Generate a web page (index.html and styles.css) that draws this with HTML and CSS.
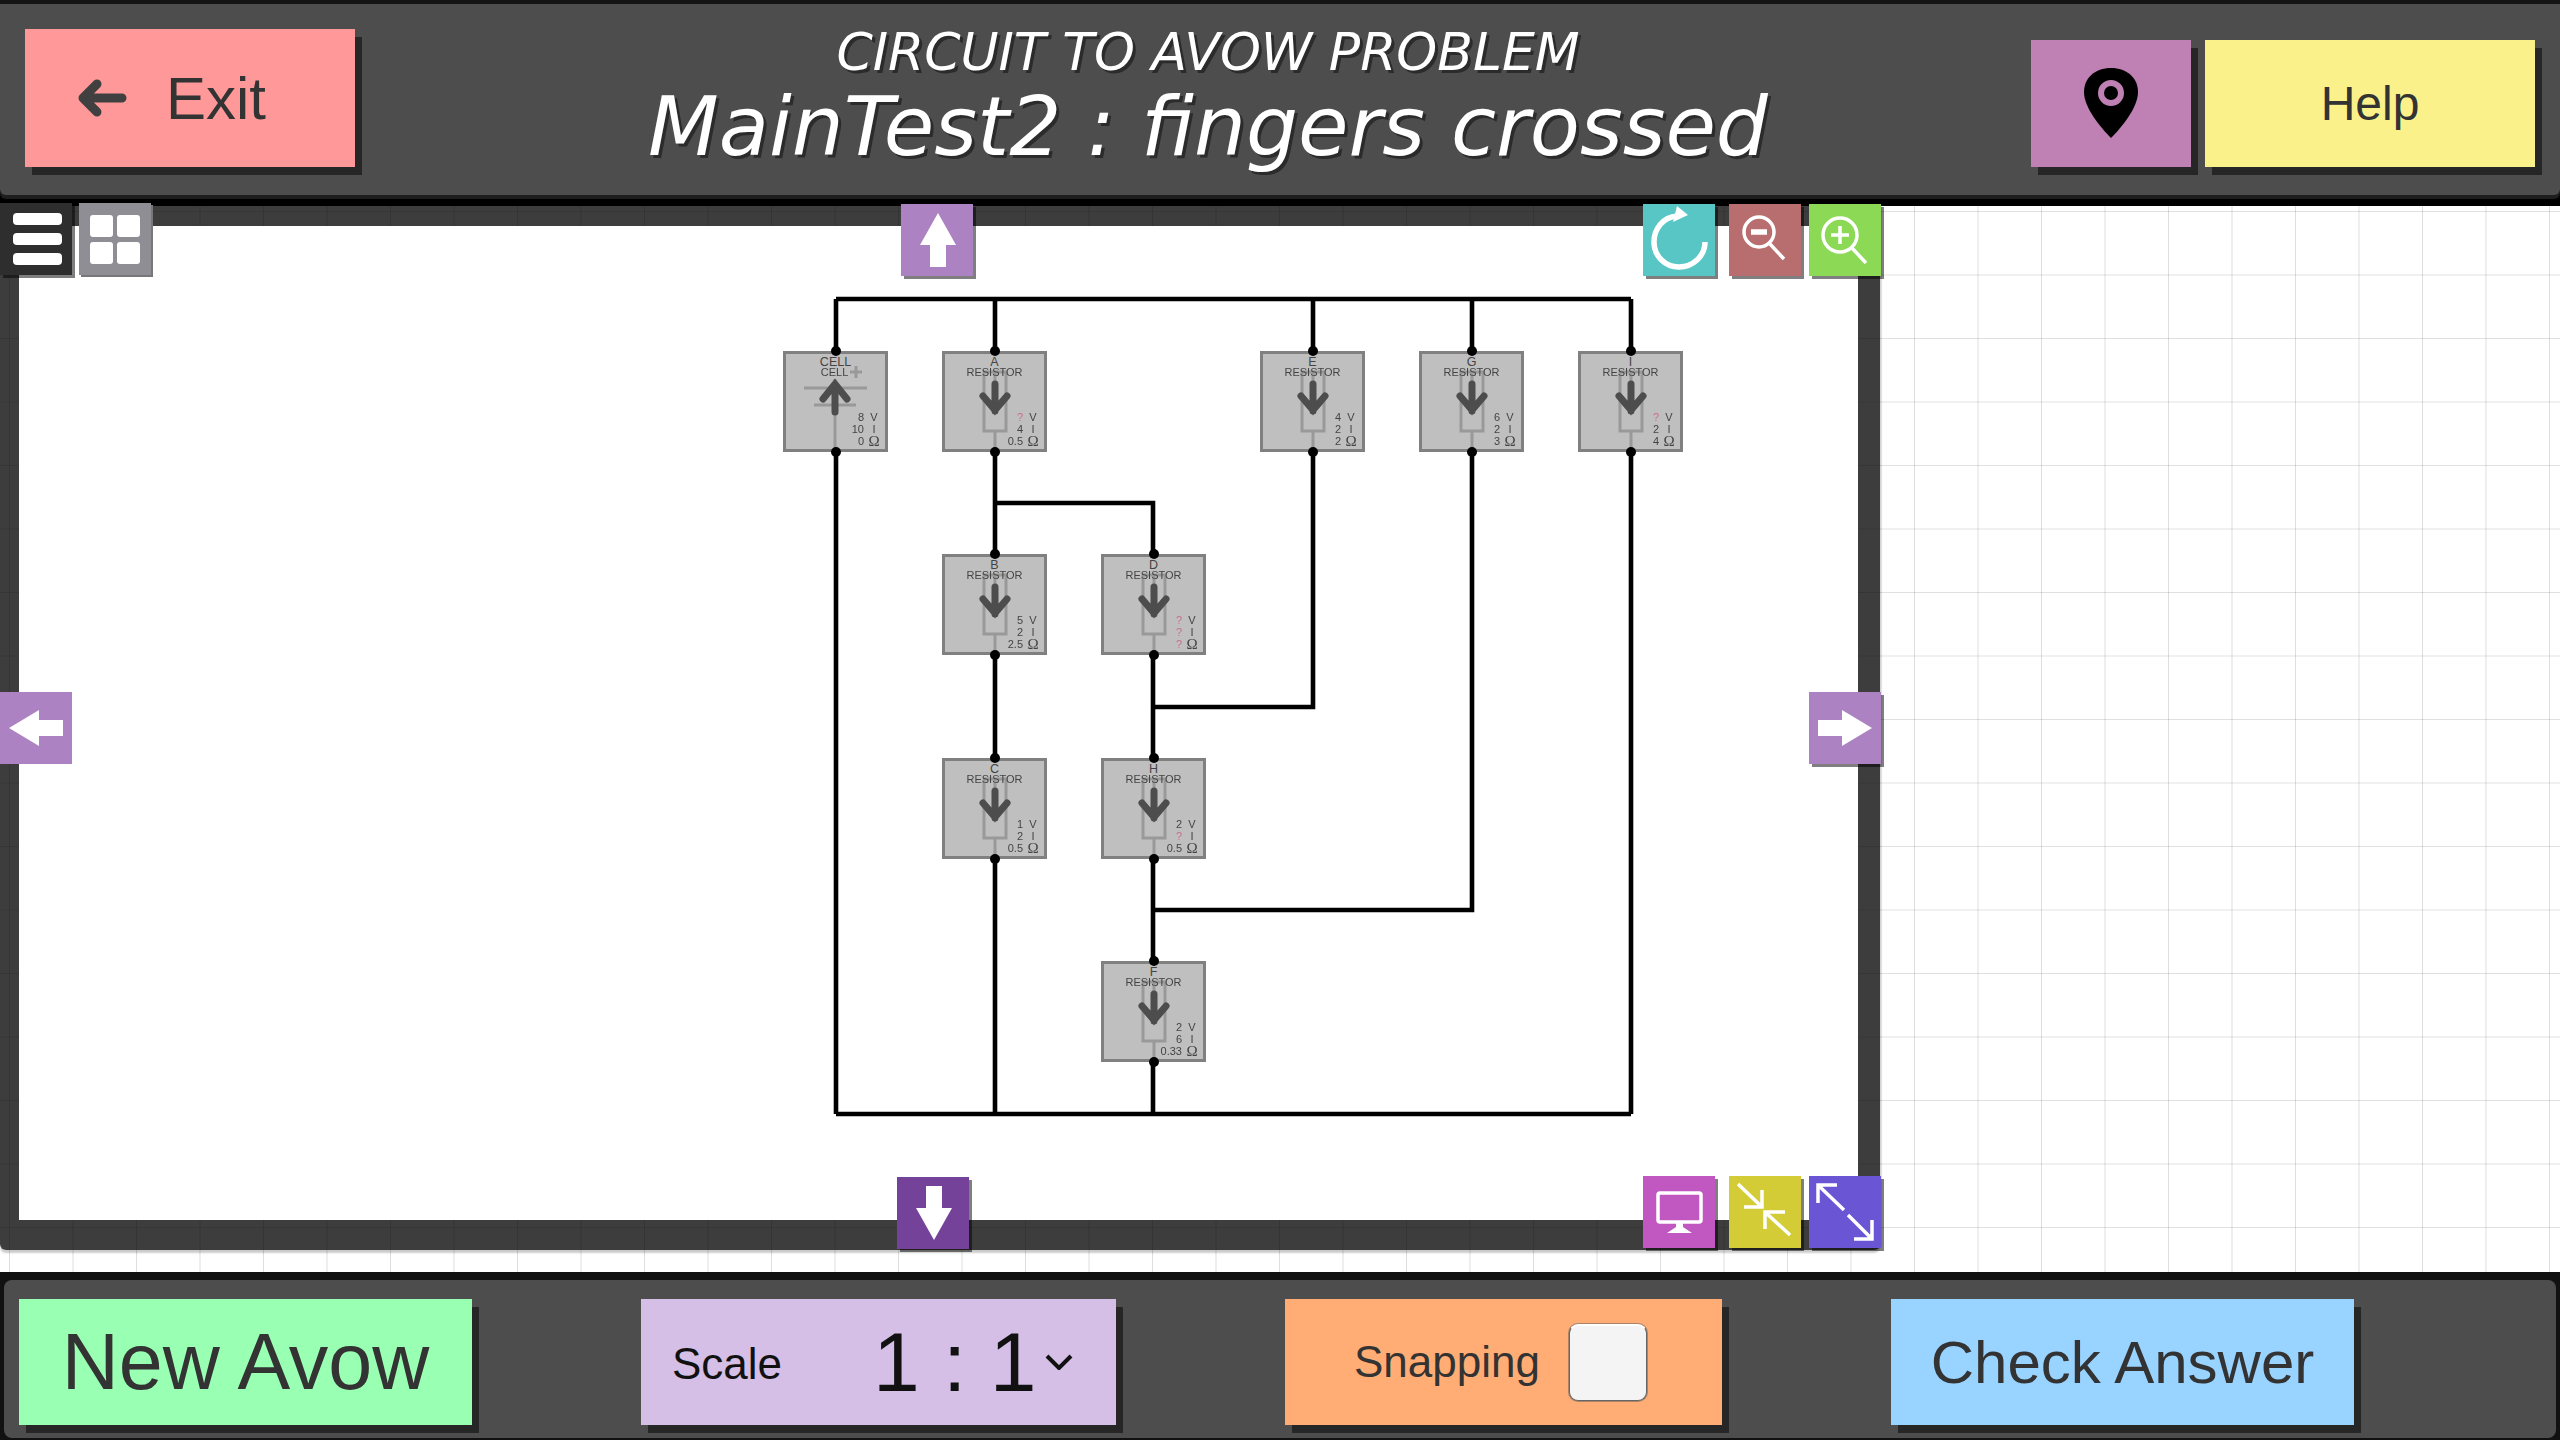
FILE: index.html
```html
<!DOCTYPE html>
<html lang="en">
<head>
<meta charset="utf-8">
<title>Circuit to AVOW problem</title>
<link rel="stylesheet" href="styles.css">
</head>
<body>
<svg class="defs" width="0" height="0" aria-hidden="true">
  <symbol id="res" viewBox="0 0 105 101">
    <path class="sym-line" d="M42 21H64V80H42ZM53 80V100M53 21V31"/>
    <path class="sym-arrow" d="M53 33V60M41 45L53 59L65 45"/>
  </symbol>
  <symbol id="cell" viewBox="0 0 105 101">
    <path class="sym-line" d="M21 37H84M31 54H73M52 28V100M67 21H79M73 15V27"/>
    <path class="sym-arrow" d="M52 61V34M40 48L52 33L64 48"/>
  </symbol>
</svg>

<header class="top">
  <div class="top-panel">
    <button class="btn exit">
      <svg class="exit-arrow" viewBox="0 0 51 38"><path d="M20 5L6 19L20 33M8 19H45"/></svg>
      <span>Exit</span>
    </button>
    <div class="title">
      <div class="title-sub">CIRCUIT TO AVOW PROBLEM</div>
      <div class="title-main">MainTest2 : fingers crossed</div>
    </div>
    <button class="btn pin" aria-label="Location">
      <svg viewBox="0 0 160 127"><path class="pin-body" d="M80 28C64 28 53 38 53 52C53 68 70 88 80 98C90 88 107 68 107 52C107 38 96 28 80 28Z"/><ellipse class="pin-ring" cx="80" cy="53" rx="10" ry="10"/></svg>
    </button>
    <button class="btn help">Help</button>
  </div>
</header>

<main class="stage">
  <section class="frame">
    <div class="board">
      <svg class="wires" viewBox="19 226 1839 994">
        <path d="M836 299H1631M836 1114H1631M836 299V351M995 299V351M1313 299V351M1472 299V351M1631 299V351M836 452V1114M1631 452V1114M995 452V554M995 503H1153V554M995 656V758M995 859V1114M1153 656V758M1153 707H1313V452M1153 859V961M1153 910H1472V452M1153 1063V1114"/>
      </svg>

      <div class="node c1 r1">
        <svg class="sym"><use href="#cell"/></svg>
        <div class="lbl">CELL</div><div class="kind cell-kind">CELL</div>
        <div class="vals"><b>8</b><i>V</i><b>10</b><i>I</i><b>0</b><i class="ohm">Ω</i></div>
      </div>
      <div class="node c2 r1">
        <svg class="sym"><use href="#res"/></svg>
        <div class="lbl">A</div><div class="kind">RESISTOR</div>
        <div class="vals"><b class="q">?</b><i>V</i><b>4</b><i>I</i><b>0.5</b><i class="ohm">Ω</i></div>
      </div>
      <div class="node c4 r1">
        <svg class="sym"><use href="#res"/></svg>
        <div class="lbl">E</div><div class="kind">RESISTOR</div>
        <div class="vals"><b>4</b><i>V</i><b>2</b><i>I</i><b>2</b><i class="ohm">Ω</i></div>
      </div>
      <div class="node c5 r1">
        <svg class="sym"><use href="#res"/></svg>
        <div class="lbl">G</div><div class="kind">RESISTOR</div>
        <div class="vals"><b>6</b><i>V</i><b>2</b><i>I</i><b>3</b><i class="ohm">Ω</i></div>
      </div>
      <div class="node c6 r1">
        <svg class="sym"><use href="#res"/></svg>
        <div class="lbl">I</div><div class="kind">RESISTOR</div>
        <div class="vals"><b class="q">?</b><i>V</i><b>2</b><i>I</i><b>4</b><i class="ohm">Ω</i></div>
      </div>
      <div class="node c2 r2">
        <svg class="sym"><use href="#res"/></svg>
        <div class="lbl">B</div><div class="kind">RESISTOR</div>
        <div class="vals"><b>5</b><i>V</i><b>2</b><i>I</i><b>2.5</b><i class="ohm">Ω</i></div>
      </div>
      <div class="node c3 r2">
        <svg class="sym"><use href="#res"/></svg>
        <div class="lbl">D</div><div class="kind">RESISTOR</div>
        <div class="vals"><b class="q">?</b><i>V</i><b class="q">?</b><i>I</i><b class="q">?</b><i class="ohm">Ω</i></div>
      </div>
      <div class="node c2 r3">
        <svg class="sym"><use href="#res"/></svg>
        <div class="lbl">C</div><div class="kind">RESISTOR</div>
        <div class="vals"><b>1</b><i>V</i><b>2</b><i>I</i><b>0.5</b><i class="ohm">Ω</i></div>
      </div>
      <div class="node c3 r3">
        <svg class="sym"><use href="#res"/></svg>
        <div class="lbl">H</div><div class="kind">RESISTOR</div>
        <div class="vals"><b>2</b><i>V</i><b class="q">?</b><i>I</i><b>0.5</b><i class="ohm">Ω</i></div>
      </div>
      <div class="node c3 r4">
        <svg class="sym"><use href="#res"/></svg>
        <div class="lbl">F</div><div class="kind">RESISTOR</div>
        <div class="vals"><b>2</b><i>V</i><b>6</b><i>I</i><b>0.33</b><i class="ohm">Ω</i></div>
      </div>
    </div>

    <div class="tools tools-tl">
      <button class="tool t-menu" aria-label="Menu"><span class="bars"><span></span><span></span><span></span></span></button>
      <button class="tool t-grid" aria-label="Grid"><span class="cells"><span></span><span></span><span></span><span></span></span></button>
    </div>
    <button class="tool nudge nudge-up" aria-label="Up"><svg viewBox="0 0 72 72"><path class="fill" d="M37 9L55 41H45V63H29V41H19Z"/></svg></button>
    <button class="tool nudge nudge-down" aria-label="Down"><svg viewBox="0 0 72 72"><path class="fill" d="M29 9H45V31H55L37 63L19 31H29Z"/></svg></button>
    <button class="tool nudge nudge-left" aria-label="Left"><svg viewBox="0 0 72 72"><path class="fill" d="M9 36L39 18V28H63V44H39V54Z"/></svg></button>
    <button class="tool nudge nudge-right" aria-label="Right"><svg viewBox="0 0 72 72"><path class="fill" d="M9 28H33V18L63 36L33 54V44H9Z"/></svg></button>

    <div class="tools tools-tr">
      <button class="tool t-refresh" aria-label="Reset"><svg viewBox="0 0 72 72"><path class="stroke thick" d="M34 12C20 13 11 25 11 38C11 52 22 63 36 63C50 63 62 52 62 38"/><path class="fill" d="M34 2L45 11L30 18Z"/></svg></button>
      <button class="tool t-out" aria-label="Zoom out"><svg viewBox="0 0 72 72"><circle class="stroke" cx="30" cy="28" r="15"/><path class="stroke" d="M41 40L55 55"/><path class="stroke thick" d="M22 28H38"/></svg></button>
      <button class="tool t-in" aria-label="Zoom in"><svg viewBox="0 0 72 72"><circle class="stroke" cx="31" cy="31" r="17"/><path class="stroke" d="M43 44L57 59M22 31H40M31 22V40"/></svg></button>
    </div>
    <div class="tools tools-br">
      <button class="tool t-display" aria-label="Display"><svg viewBox="0 0 72 72"><rect class="stroke" x="15" y="17" width="43" height="29" rx="2"/><path class="fill" d="M33 47H40V51L49 57H24L33 51Z"/></svg></button>
      <button class="tool t-shrink" aria-label="Shrink"><svg viewBox="0 0 72 72"><path class="stroke" d="M9 8L33 31M33 14V31H15M61 59L36 36M36 53V36H56"/></svg></button>
      <button class="tool t-expand" aria-label="Expand"><svg viewBox="0 0 72 72"><path class="stroke" d="M35 34L9 9M9 27V9H28M39 39L63 63M63 44V63H45"/></svg></button>
    </div>
  </section>
</main>

<footer class="bottom">
  <div class="bottom-panel">
    <button class="btn new-avow">New Avow</button>
    <div class="btn scale">
      <span class="scale-label">Scale</span>
      <span class="scale-value">1 : 1</span>
      <svg class="chevron" viewBox="0 0 28 16"><path d="M2 2L14 14L26 2"/></svg>
    </div>
    <div class="btn snapping">
      <span>Snapping</span>
      <span class="check"></span>
    </div>
    <button class="btn check-answer">Check Answer</button>
  </div>
</footer>
</body>
</html>
```
FILE: styles.css
```css
* { box-sizing: border-box; }
html, body { margin: 0; padding: 0; }
body {
  width: 2560px;
  height: 1440px;
  overflow: hidden;
  display: flex;
  flex-direction: column;
  font-family: "Liberation Sans", Arial, sans-serif;
  color: #333;
  background: #fff;
}
.defs { position: absolute; }
button { font-family: inherit; border: 0; padding: 0; margin: 0; color: inherit; }

/* header */
.top {
  height: 206px;
  padding-top: 4px;
  background: #000;
  background-image: linear-gradient(#141414 0 4px, #000 4px);
  flex: none;
}
.top-panel {
  height: 191px;
  display: flex;
  align-items: flex-end;
  padding: 0 25px 28px;
  background: #4d4d4d;
  border-radius: 0 0 6px 6px;
  box-shadow: 0 4px 0 #1e1e1e;
}
.btn {
  display: flex;
  align-items: center;
  justify-content: center;
  flex: none;
  box-shadow: 7px 8px 0 #262626;
}
.exit {
  width: 330px;
  height: 138px;
  background: #ff9999;
  font-size: 60px;
  gap: 38px;
  padding-right: 37px;
}
.exit-arrow { width: 51px; height: 38px; fill: none; stroke: #404040; stroke-width: 9; stroke-linecap: round; stroke-linejoin: round; }
.title {
  flex: 1;
  align-self: flex-start;
  padding: 18px 0 0 30px;
  text-align: center;
  color: #fff;
  font-family: "DejaVu Sans", sans-serif;
  font-style: italic;
  text-shadow: 3px 3px 0 #2b2b2b;
}
.title-sub { font-size: 52px; line-height: 60px; }
.title-main { font-size: 82px; line-height: 90px; }
.pin { width: 160px; height: 127px; background: #bf80b3; margin-right: 14px; }
.pin svg { width: 160px; height: 127px; }
.pin-body { fill: #000; }
.pin-ring { fill: #000; stroke: #bf80b3; stroke-width: 6; }
.help { width: 330px; height: 127px; background: #faf18a; font-size: 48px; }

/* canvas */
.stage {
  flex: 1;
  min-height: 0;
  background-color: #fff;
  background-image:
    linear-gradient(90deg, rgba(0,0,0,.13) 1px, transparent 1px),
    linear-gradient(rgba(0,0,0,.12) 1px, transparent 1px);
  background-size: 63.5px 63.5px;
  background-position: 9px 5px;
}
.frame {
  position: relative;
  width: 1880px;
  height: 1044px;
  padding: 20px 22px 30px 19px;
  background: rgba(0,0,0,.76);
  border-radius: 0 0 6px 6px;
  box-shadow: 0 3px 2px rgba(0,0,0,.2), 2px 0 1px rgba(0,0,0,.12);
}
.board {
  position: relative;
  width: 100%;
  height: 100%;
  background: #fff;
}
.wires { position: absolute; left: 0; top: 0; width: 100%; height: 100%; fill: none; stroke: #000; stroke-width: 4.6; }

/* circuit nodes: placed on a free canvas */
.node {
  position: absolute;
  width: 105px;
  height: 101px;
  background: #bfbfbf;
  border: 3px solid #808080;
  color: #444;
  text-align: center;
  filter: blur(.35px);
}
.node::before, .node::after {
  content: "";
  position: absolute;
  left: 45px;
  width: 10px;
  height: 10px;
  border-radius: 50%;
  background: #000;
}
.node::before { top: -8px; }
.node::after { bottom: -8px; }
.c1 { left: 764px; } .c2 { left: 923px; } .c3 { left: 1082px; }
.c4 { left: 1241px; } .c5 { left: 1400px; } .c6 { left: 1559px; }
.r1 { top: 125px; } .r2 { top: 328px; } .r3 { top: 532px; } .r4 { top: 735px; }
.sym { position: absolute; left: -3px; top: -3px; width: 105px; height: 101px; }
.sym-line { fill: none; stroke: #999; stroke-width: 3; }
.sym-arrow { fill: none; stroke: #4d4d4d; stroke-width: 7; stroke-linecap: round; stroke-linejoin: miter; }
.lbl { position: absolute; left: 0; right: 0; top: 0; font-size: 12.5px; line-height: 16px; }
.kind { position: absolute; left: 0; right: 0; top: 11px; font-size: 11px; line-height: 14px; }
.cell-kind { right: 2px; }
.vals {
  position: absolute;
  left: 40px;
  top: 57px;
  width: 56px;
  display: grid;
  grid-template-columns: 1fr 16px;
  grid-auto-rows: 12px;
  column-gap: 2px;
  font-size: 11px;
  line-height: 12px;
}
.vals b { font-weight: 400; text-align: right; }
.vals i { font-style: normal; text-align: center; }
.vals .ohm { font-family: "Liberation Serif", serif; font-size: 15px; }
.vals .q { color: #c9708a; }

/* tool buttons over the frame */
.tools { position: absolute; display: flex; }
.tool {
  display: block;
  width: 72px;
  height: 72px;
  flex: none;
  box-shadow: 3px 3px 0 rgba(0,0,0,.5);
}
.tool svg { display: block; width: 72px; height: 72px; }
.fill { fill: #fff; }
.stroke { fill: none; stroke: #fff; stroke-width: 3.5; }
.thick { stroke-width: 5.5; }
.tools-tl { left: 0; top: -3px; gap: 7px; }
.tools-tr { left: 1643px; top: -2px; }
.tools-br { left: 1643px; top: 970px; }
.tools-tr .tool:first-child, .tools-br .tool:first-child { margin-right: 14px; }
.tools-tr .tool:nth-child(2), .tools-br .tool:nth-child(2) { margin-right: 8px; }
.t-menu { background: #2e2e2e; }
.t-grid { background: #8e8e94; box-shadow: 2px 2px 0 #777; }
.bars { display: flex; flex-direction: column; gap: 8px; padding: 0 10px 0 13px; }
.bars span { height: 12px; background: #fff; border-radius: 4px; }
.cells { display: grid; grid-template-columns: 23px 23px; grid-auto-rows: 22px; gap: 5px 4px; padding: 0 0 0 11px; }
.cells span { background: #fff; border-radius: 3px; }
.nudge { position: absolute; background: #ac82c2; }
.nudge-up { left: 901px; top: -2px; }
.nudge-down { left: 897px; top: 971px; background: #744299; }
.nudge-left { left: 0; top: 486px; box-shadow: none; }
.nudge-right { left: 1809px; top: 486px; }
.t-refresh { background: #59c6c6; }
.t-out { background: #b86e6e; }
.t-in { background: #8cd955; }
.t-display { background: #c157c1; }
.t-shrink { background: #d4cc37; }
.t-expand { background: #6a55d5; }

/* footer */
.bottom {
  height: 168px;
  flex: none;
  padding: 8px 4px 2px;
  background: #111;
}
.bottom-panel {
  height: 158px;
  display: flex;
  align-items: flex-start;
  gap: 169px;
  padding: 19px 0 0 15px;
  background: #4d4d4d;
  border-radius: 8px;
}
.new-avow { width: 453px; height: 126px; background: #99ffb3; font-size: 79px; }
.scale {
  width: 475px;
  height: 126px;
  background: #d5bfe6;
  color: #111;
  justify-content: flex-start;
  padding-left: 31px;
}
.scale-label { font-size: 44px; width: 201px; padding-top: 4px; }
.scale-value { font-size: 84px; white-space: pre; }
.chevron { width: 28px; height: 16px; margin-left: 9px; fill: none; stroke: #111; stroke-width: 4; }
.snapping {
  width: 437px;
  height: 126px;
  background: #ffad75;
  font-size: 44px;
  justify-content: flex-start;
  padding-left: 69px;
  gap: 29px;
}
.check {
  width: 78px;
  height: 77px;
  background: #f4f4f4;
  border: 1px solid #666;
  border-top: 2px solid #fff;
  border-radius: 9px;
  box-shadow: 0 0 0 1px rgba(90,90,90,.5);
}
.check-answer { width: 463px; height: 126px; background: #99d3ff; font-size: 60px; }
```
